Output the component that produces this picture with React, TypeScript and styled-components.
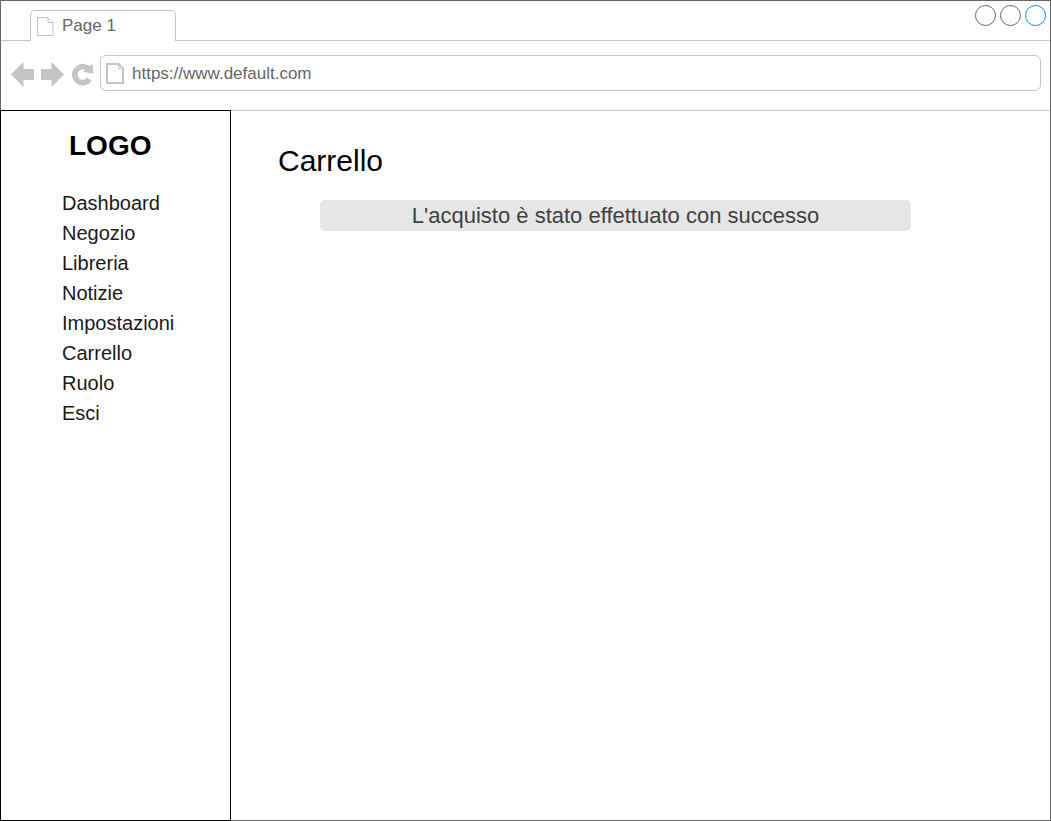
import React, { useState } from "react";
import styled, { createGlobalStyle } from "styled-components";

const ink = "#666666";
const line = "#c4c4c4";

const GlobalStyle = createGlobalStyle`
  *, *::before, *::after { box-sizing: border-box; }
  body {
    margin: 0;
    background: #ffffff;
    font-family: "Liberation Sans", Arial, sans-serif;
  }
`;

const Page = styled.div`
  display: flex;
  flex-direction: column;
  min-height: 100vh;
`;

const BrowserChrome = styled.header`
  border: 1px solid ${ink};
  border-bottom: 0;
`;

const TabStrip = styled.div`
  display: flex;
  justify-content: space-between;
  height: 40px;
  padding: 4px 4px 0 29px;
  border-bottom: 1px solid ${line};
`;

const Tab = styled.button`
  display: flex;
  align-items: center;
  align-self: flex-end;
  gap: 8px;
  width: 146px;
  height: 31px;
  margin: 0 0 -1px;
  padding: 0 6px;
  border: 1px solid ${line};
  border-bottom: 0;
  border-radius: 5px 5px 0 0;
  background: #ffffff;
  color: ${ink};
  font: 17px/20px "Liberation Sans", Arial, sans-serif;
  text-align: left;
`;

const WindowControls = styled.div`
  display: flex;
  gap: 4px;
`;

const WindowButton = styled.button<{ $color: string }>`
  width: 21px;
  height: 21px;
  padding: 0;
  border: 1px solid ${(p) => p.$color};
  border-radius: 50%;
  background: #ffffff;
`;

const Toolbar = styled.div`
  display: flex;
  padding: 14px 9px 19px;
`;

const ToolButton = styled.button`
  flex: none;
  width: 30px;
  height: 36px;
  padding: 0;
  border: 0;
  background: none;
  color: ${line};

  svg {
    display: block;
  }
`;

const AddressBar = styled.label`
  display: flex;
  flex: 1;
  align-items: center;
  gap: 8px;
  height: 36px;
  padding: 0 5px;
  border: 1px solid ${line};
  border-radius: 6px;
`;

const AddressInput = styled.input`
  flex: 1;
  min-width: 0;
  padding: 2px 0 0;
  border: 0;
  outline: 0;
  background: none;
  color: ${ink};
  font: 17px/20px "Liberation Sans", Arial, sans-serif;
`;

const Body = styled.div`
  display: flex;
  flex: 1;
`;

const Sidebar = styled.aside`
  flex: none;
  width: 231px;
  padding-top: 19px;
  border: 1px solid #000000;
`;

const Logo = styled.div`
  padding-left: 68px;
  font-size: 28px;
  font-weight: bold;
  line-height: 32px;
`;

const NavList = styled.ul`
  margin: 26px 0 0;
  padding: 0 0 0 61px;
  list-style: none;
`;

const NavLink = styled.a`
  color: #1a1a1a;
  font-size: 20px;
  line-height: 30px;
  text-decoration: none;
  display: block;
`;

const Main = styled.main`
  flex: 1;
  min-width: 0;
  padding: 32px 139px 32px 47px;
  border: solid ${ink};
  border-width: 1px 1px 1px 0;
  border-top-color: ${line};
`;

const Title = styled.h1`
  margin: 0;
  font-size: 30px;
  font-weight: normal;
  line-height: 36px;
`;

const Notice = styled.p`
  margin: 21px 0 0 42px;
  border-radius: 5px;
  background: #e6e6e6;
  color: #404040;
  font-size: 22px;
  line-height: 31px;
  text-align: center;
`;

const TabPageIcon = () => (
  <svg width="17" height="20" viewBox="0 0 17 20" fill="none" stroke={line} aria-hidden="true">
    <path d="M.5 1.5h10.500l5 5v13H.5zM11 1.5v5h5" />
  </svg>
);

const AddressPageIcon = () => (
  <svg width="18" height="21" viewBox="0 0 18 21" fill="none" stroke={line} aria-hidden="true">
    <path d="M1 1h11.500l4.500 4.500V20H1z" strokeWidth="2" />
    <path d="M12.500 1v5H17" />
  </svg>
);

const BackIcon = () => (
  <svg width="30" height="36" viewBox="0 0 30 36" fill="currentColor" aria-hidden="true">
    <path d="M1 19.500 13.500 7v7H24v11H13.500v7z" />
  </svg>
);

const ForwardIcon = () => (
  <svg width="30" height="36" viewBox="0 0 30 36" fill="currentColor" aria-hidden="true">
    <path d="M24 19.500 11.500 7v7H1v11h10.500v7z" />
  </svg>
);

const ReloadIcon = () => (
  <svg width="30" height="36" viewBox="0 0 30 36" aria-hidden="true">
    <path
      d="M19.300 15A8 8 0 1 0 19.400 24.200"
      fill="none"
      stroke="currentColor"
      strokeWidth="5.600"
    />
    <path d="M22.300 8.800 23.700 18.800 13 16.800z" fill="currentColor" />
  </svg>
);

const navItems = [
  "Dashboard",
  "Negozio",
  "Libreria",
  "Notizie",
  "Impostazioni",
  "Carrello",
  "Ruolo",
  "Esci",
];

export default function App() {
  const [address, setAddress] = useState("https://www.default.com");

  return (
    <Page>
      <GlobalStyle />
      <BrowserChrome>
        <TabStrip>
          <Tab type="button">
            <TabPageIcon />
            Page 1
          </Tab>
          <WindowControls>
            <WindowButton type="button" aria-label="Minimize" $color={ink} />
            <WindowButton type="button" aria-label="Maximize" $color={ink} />
            <WindowButton type="button" aria-label="Close" $color="#008cff" />
          </WindowControls>
        </TabStrip>
        <Toolbar>
          <ToolButton type="button" aria-label="Back">
            <BackIcon />
          </ToolButton>
          <ToolButton type="button" aria-label="Forward">
            <ForwardIcon />
          </ToolButton>
          <ToolButton type="button" aria-label="Reload">
            <ReloadIcon />
          </ToolButton>
          <AddressBar>
            <AddressPageIcon />
            <AddressInput
              type="text"
              aria-label="Address"
              value={address}
              onChange={(e) => setAddress(e.target.value)}
            />
          </AddressBar>
        </Toolbar>
      </BrowserChrome>
      <Body>
        <Sidebar>
          <Logo>LOGO</Logo>
          <nav>
            <NavList>
              {navItems.map((item) => (
                <li key={item}>
                  <NavLink href={`#${item.toLowerCase()}`}>{item}</NavLink>
                </li>
              ))}
            </NavList>
          </nav>
        </Sidebar>
        <Main>
          <Title>Carrello</Title>
          <Notice role="status">L'acquisto è stato effettuato con successo</Notice>
        </Main>
      </Body>
    </Page>
  );
}
